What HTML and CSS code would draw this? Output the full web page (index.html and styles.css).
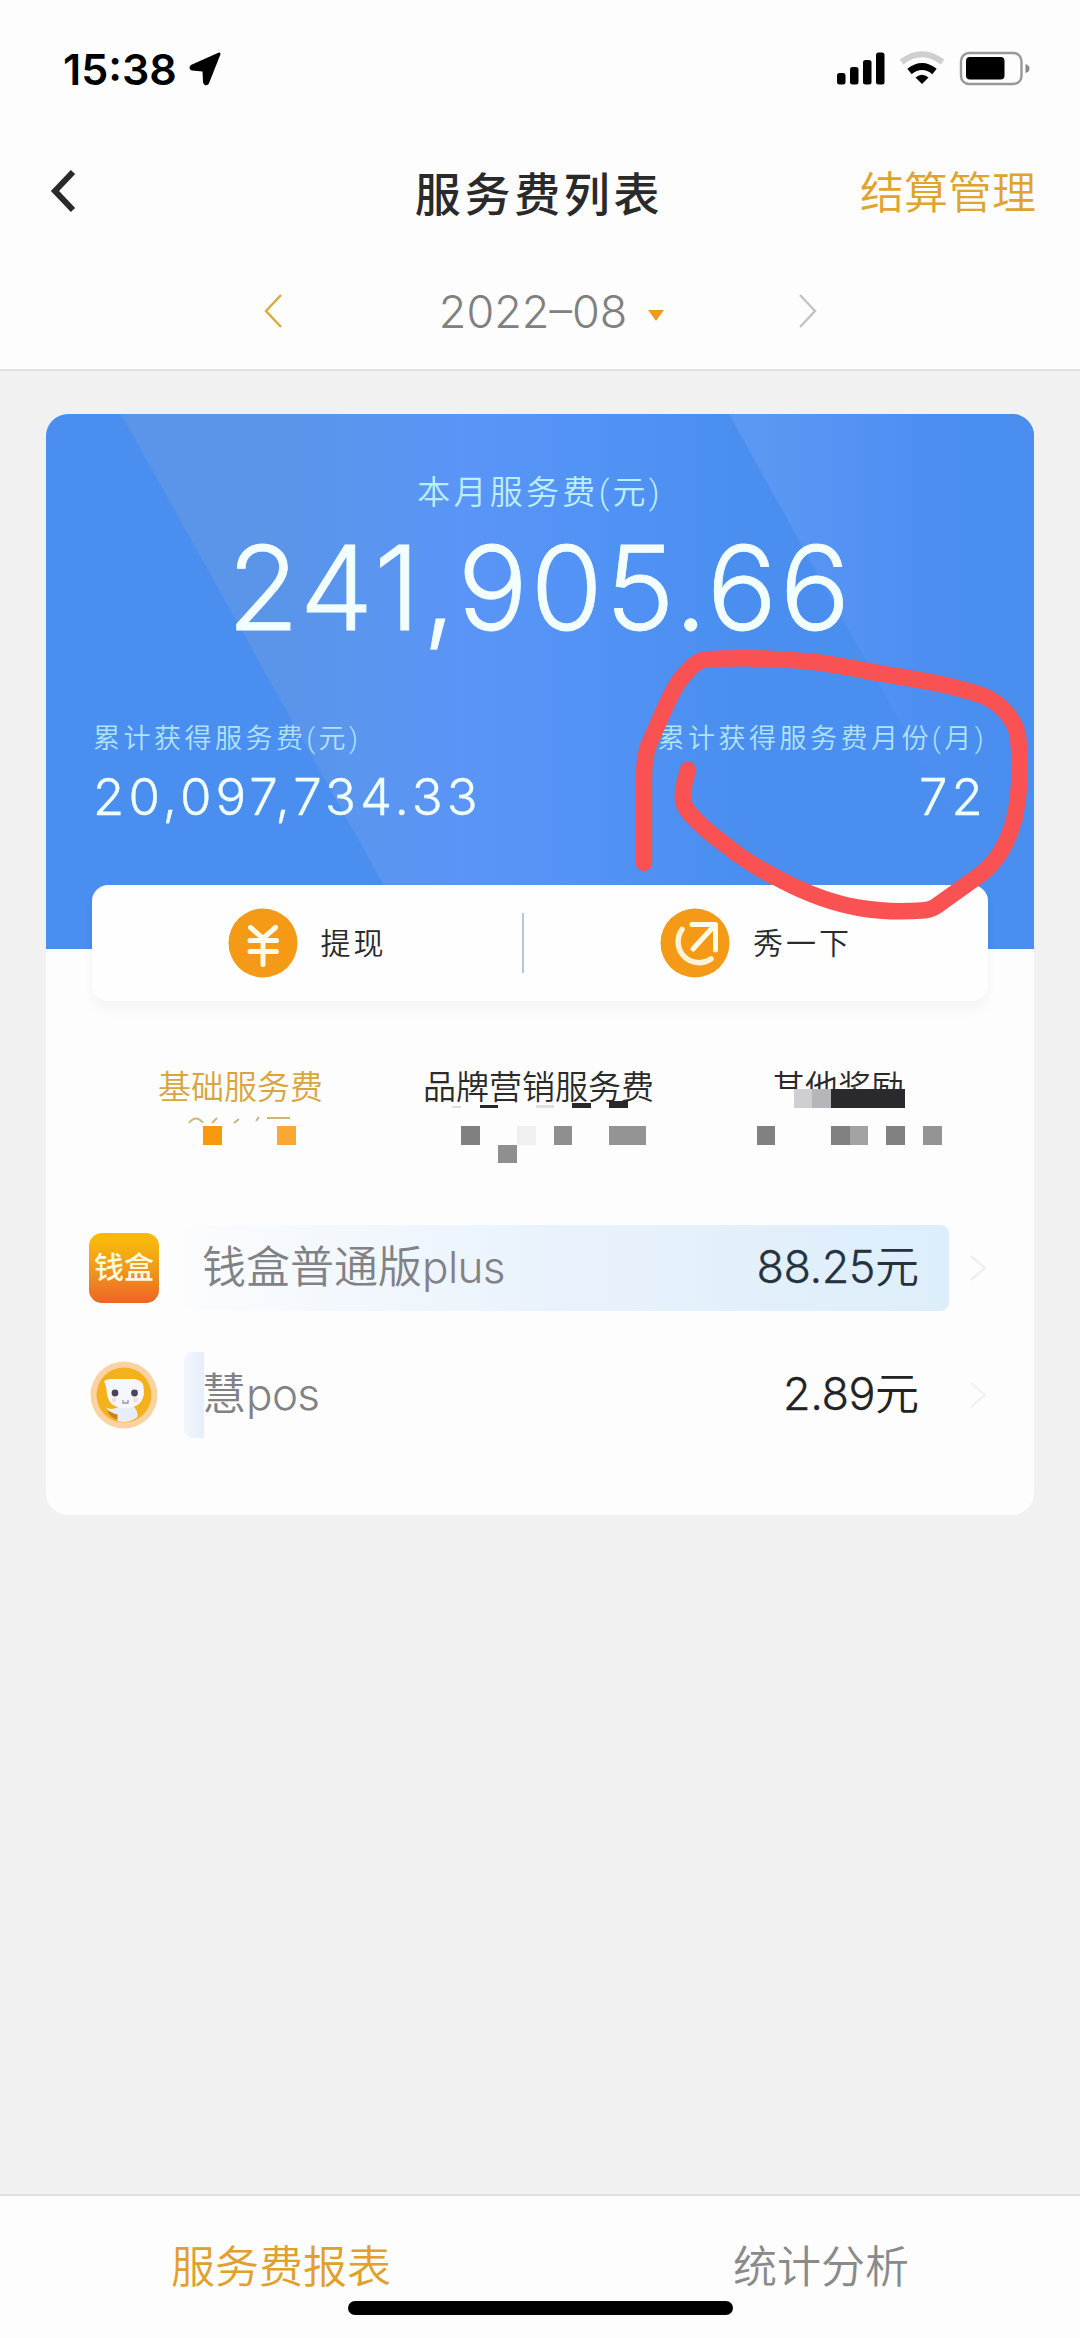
FILE: index.html
```html
<!DOCTYPE html>
<html lang="zh-CN">
<head>
<meta charset="utf-8">
<title>服务费列表</title>
<link rel="stylesheet" href="styles.css">
</head>
<body>
<div class="screen">
  <header class="header">
    <div class="status">
      <span class="clock">15:38</span>
      <svg class="location" width="34" height="34" viewBox="0 0 34 34"><path d="M31 2 4 14.200Q2 16 4 17L14.500 18Q16 18 16 19.500L16.500 30Q17.500 33 19.500 31Z" stroke="#000" stroke-width="3" stroke-linejoin="round"/></svg>
      <svg class="indicators" width="194" height="36" viewBox="836 51 194 36">
        <rect x="837" y="73" width="8.500" height="11.500" rx="2.500"/>
        <rect x="850" y="67" width="8.500" height="17.500" rx="2.500"/>
        <rect x="863" y="60" width="8.500" height="24.500" rx="2.500"/>
        <rect x="876" y="52.500" width="8.500" height="32" rx="2.500"/>
        <path d="M901.500 62Q922 46.500 942.500 62" fill="none" stroke="#cfcfcf" stroke-width="6"/>
        <path d="M909.500 71.500Q922 61.500 934.500 71.500" fill="none" stroke="#000" stroke-width="7"/>
        <path d="M915.500 77.500Q922 72 928.500 77.500L922 84Z"/>
        <rect x="961" y="53" width="60.500" height="31" rx="8" fill="none" stroke="#999" stroke-width="2.400"/>
        <rect x="966" y="57" width="38.500" height="22.500" rx="4"/>
        <path d="M1025.500 64q4 1 4 4.500t-4 4.500z" fill="#888"/>
      </svg>
    </div>
    <nav class="titlebar">
      <svg class="back" width="28" height="44" viewBox="0 0 28 44"><path d="M23 3 5 22 23 41" fill="none" stroke="#2a2a2a" stroke-width="6"/></svg>
      <h1 class="title">服务费列表</h1>
      <a class="manage">结算管理</a>
    </nav>
    <div class="month">
      <svg width="20" height="36" viewBox="0 0 20 36"><path d="M18 2 3 18 18 34" fill="none" stroke="#dba93c" stroke-width="2.400"/></svg>
      <div class="month-value"><span>2022–08</span><i class="caret"></i></div>
      <svg width="20" height="36" viewBox="0 0 20 36"><path d="M2 2 17 18 2 34" fill="none" stroke="#c4c4c4" stroke-width="2.400"/></svg>
    </div>
  </header>

  <main class="content">
    <section class="card">
      <div class="summary">
        <p class="summary-label">本月服务费(元)</p>
        <p class="summary-total">241,905.66</p>
        <div class="totals">
          <div>
            <p class="total-label">累计获得服务费(元)</p>
            <p class="total-value">20,097,734.33</p>
          </div>
          <div class="total-right">
            <p class="total-label">累计获得服务费月份(月)</p>
            <p class="total-value">72</p>
          </div>
        </div>
      </div>

      <div class="actions">
        <div class="action withdraw">
          <svg width="70" height="70" viewBox="0 0 70 70"><circle cx="35" cy="35" r="34.500" fill="#f49a17"/><path d="M22.500 19.500 35 30.500 47.500 19.500M22 32.500H48.500M22 43.500H48.500M35 30V56.500" fill="none" stroke="#fffbe8" stroke-width="5" stroke-linecap="round"/></svg>
          <span>提现</span>
        </div>
        <i class="divider"></i>
        <div class="action">
          <svg width="70" height="70" viewBox="0 0 70 70"><circle cx="35" cy="35" r="34.500" fill="#f49a17"/><path d="M22 21.500A21 21 0 0 0 51 51" fill="none" stroke="#fff3d6" stroke-width="5.500" stroke-linecap="round"/><path d="M33 41 54 18M32 16.500H55.500V42" fill="none" stroke="#fffbe8" stroke-width="5" stroke-linecap="round" stroke-linejoin="round"/></svg>
          <span>秀一下</span>
        </div>
      </div>

      <div class="tabs">
        <span class="tab active">基础服务费</span>
        <span class="tab">品牌营销服务费</span>
        <span class="tab">其他奖励</span>
      </div>

      <div class="row">
        <div class="logo">钱盒</div>
        <div class="bar">
          <span class="name">钱盒普通版<b>plus</b></span>
          <span class="amount">88.25<b>元</b></span>
        </div>
        <svg class="go" width="20" height="30" viewBox="0 0 20 30"><path d="M3 3 17 15 3 27" fill="none" stroke="#efefef" stroke-width="2.500"/></svg>
      </div>
      <div class="row">
        <svg class="avatar" width="70" height="70" viewBox="0 0 70 70">
          <circle cx="35" cy="35" r="33.500" fill="#fbd2a2"/>
          <circle cx="35" cy="35" r="27.500" fill="#f3b11c"/>
          <path d="M18 51 29 53V60Q22 58 18 51Z" fill="#c98312"/>
          <path d="M17 47.500Q24 51 31 46H44Q49 50 48.500 57Q42 62 35 62Q31 62 28.500 61V54.500Q21 53 17 47.500Z" fill="#e9ecfa"/>
          <path d="M15 21Q19 18.500 24 19H46Q55 20 55 31Q55 48 36 48Q20 48 18 34Q17.500 26 15 21Z" fill="#f6f6fe"/>
          <circle cx="26" cy="33" r="3.400" fill="#44465c"/><circle cx="45.500" cy="33" r="3.400" fill="#44465c"/>
          <path d="M34 40v3h5v-3" fill="none" stroke="#9b94a8" stroke-width="1.300"/>
          <circle cx="25" cy="40" r="2.400" fill="#f3dde2"/><circle cx="46.500" cy="40" r="2.400" fill="#f3dde2"/>
        </svg>
        <div class="bar short">
          <span class="name">慧<b>pos</b></span>
          <span class="amount">2.89<b>元</b></span>
        </div>
        <svg class="go" width="20" height="30" viewBox="0 0 20 30"><path d="M3 3 17 15 3 27" fill="none" stroke="#f2f2f2" stroke-width="2.500"/></svg>
      </div>
    </section>
  </main>

  <footer class="footer">
    <a class="footer-tab active">服务费报表</a>
    <a class="footer-tab">统计分析</a>
    <i class="home"></i>
  </footer>

  <svg class="markup" width="1080" height="2338" viewBox="0 0 1080 2338">
    <!-- mosaic over the tab amounts -->
    <path d="M189 1123Q196 1114 203 1123M212 1123 217 1118M234 1123 239 1119M256 1121 259 1117M267 1118H290" fill="none" stroke="#cfb57a" stroke-width="2"/>
    <g shape-rendering="crispEdges">
      <path d="M757 1089h160v20h-160z" fill="#fdfdfd"/>
      <rect x="203" y="1126" width="19" height="19" fill="#f7980f"/>
      <rect x="277" y="1126" width="19" height="19" fill="#f8a935"/>
      <path d="M480 1105h18v3h-18zM572 1103h19v5h-19zM609 1101h19v7h-19z" fill="#28282a"/>
      <path d="M452 1106h9v2h-9zM536 1105h18v3h-18z" fill="#dedede"/>
      <path d="M461 1126h19v19h-19z" fill="#808080"/>
      <path d="M517 1126h19v19h-19z" fill="#f0f0f0"/>
      <path d="M554 1126h18v19h-18zM498 1145h19v18h-19z" fill="#8f8f8f"/>
      <path d="M609 1126h37v19h-37zM923 1126h19v19h-19z" fill="#949494"/>
      <path d="M757 1126h18v19h-18zM831 1126h19v19h-19zM886 1126h19v19h-19z" fill="#818181"/>
      <path d="M850 1126h18v19h-18z" fill="#a3a3a3"/>
      <path d="M794 1089h18v19h-18z" fill="#cfcfd1"/>
      <path d="M812 1089h19v19h-19z" fill="#b6b6ba"/>
      <path d="M831 1089h74v19h-74z" fill="#2a2a2e"/>
    </g>
    <!-- hand-drawn marker circle -->
    <path d="M644 863V778C644 750 650 742 657 726C665 708 671 692 680 680C692 665 698 659 712 659C745 657 790 659 822 663C850 667 875 673 902 677C925 681 938 683 953 687C965 690 978 693 988 698C1005 707 1018 724 1018.500 742C1021 770 1019 800 1014 820C1008 842 996 864 977 877L935 907Q930 910 922 910.500C900 912 878 911 860 908C830 903 800 890 781 880C755 867 740 857 727 846C710 834 695 820 687 810C679 798 684 785 688 770" fill="none" stroke="#fa5252" stroke-width="16.500" stroke-linecap="round" stroke-linejoin="round"/>
  </svg>
</div>
</body>
</html>
```
FILE: styles.css
```css
* { box-sizing: border-box; margin: 0; padding: 0; }
body {
  font-family: Roboto, "Noto Sans CJK SC", sans-serif;
  font-weight: 350;
  background: #f1f1f1;
  color: #2a2a2a;
}
.screen {
  position: relative;
  width: 1080px;
  height: 2338px;
  display: flex;
  flex-direction: column;
  overflow: hidden;
}
svg { display: block; flex: none; }

.header {
  height: 371px;
  background: #fdfdfd;
  border-bottom: 2px solid #e2e2e2;
}
.status {
  display: flex;
  align-items: center;
  height: 138px;
  padding: 0 50px 0 63px;
}
.clock {
  width: 125px;
  font: 600 43px/50px Inter, sans-serif;
  letter-spacing: 0;
  color: #000;
}
.indicators { margin-left: auto; }
.titlebar {
  display: grid;
  grid-template-columns: 200px 1fr 200px;
  align-items: center;
  height: 106px;
  padding: 0 44px 0 50px;
}
.title {
  font-size: 46px;
  font-weight: 500;
  letter-spacing: 3.7px;
  text-align: center;
  line-height: 64px;
  padding: 8px 8px 0 0;
}
.manage {
  font-size: 44px;
  color: #dfa42c;
  text-align: right;
  white-space: nowrap;
  padding-bottom: 2px;
}
.month {
  display: flex;
  align-items: center;
  justify-content: space-between;
  height: 134px;
  width: 555px;
  margin-left: 263px;
}
.month-value {
  display: flex;
  align-items: center;
  gap: 21px;
  margin-left: 22px;
  font-family: Inter, sans-serif;
  font-weight: 300;
  font-size: 45px;
  letter-spacing: 0;
  color: #808080;
}
.caret {
  border: 8px solid transparent;
  border-top: 11px solid #ec9a22;
  border-bottom: 0;
  margin-top: 8px;
}

.content { flex: 1; padding: 43px 46px 0; }
.card {
  height: 1101px;
  background: #fdfdfd;
  border-radius: 22px;
  overflow: hidden;
}
.summary {
  position: relative;
  z-index: 0;
  height: 535px;
  padding: 56px 47px 0;
  color: #f2feff;
  background: #4a8ef0;
}
/* slanted light facets behind the figures */
.summary::before,
.summary::after {
  content: "";
  position: absolute;
  inset: 0;
  z-index: -1;
}
.summary::before {
  background: linear-gradient(90deg, #5a95ea 25%, #5a95f7 42%, #4f92f4 60%, #4a8ef0 70%);
  clip-path: polygon(75px 0, 683px 0, 980px 535px, 340px 535px, 340px 475px);
}
.summary::after {
  background: linear-gradient(90deg, #5b98f4 72%, #5191f3 84%, #4a8ef0 93%);
  clip-path: polygon(683px 0, 988px 0, 988px 535px, 980px 535px);
}
.summary-label {
  font-size: 33px;
  line-height: 46px;
  letter-spacing: 3.3px;
  text-align: center;
  color: #bdeefb;
}
.summary-total {
  font-family: Inter, sans-serif;
  font-weight: 300;
  font-size: 117px;
  line-height: 140px;
  letter-spacing: 2.6px;
  text-align: center;
  padding-top: 2px;
  -webkit-text-stroke: 0.8px;
}
.totals {
  display: flex;
  justify-content: space-between;
  margin-top: 62px;
}
.total-label {
  font-size: 27px;
  line-height: 38px;
  letter-spacing: 3.5px;
  color: #b0e2fa;
}
.total-value {
  font-family: Inter, sans-serif;
  font-weight: 300;
  font-size: 51px;
  line-height: 64px;
  letter-spacing: 4.1px;
  margin-top: 7px;
  -webkit-text-stroke: 0.4px;
}
.total-right { text-align: right; }

.actions {
  position: relative;
  display: flex;
  align-items: center;
  height: 116px;
  margin: -64px 46px 0;
  background: #fefefe;
  border-radius: 16px;
  box-shadow: 0 8px 14px rgba(0, 0, 0, 0.04);
}
.action {
  flex: 1;
  display: flex;
  align-items: center;
  justify-content: center;
  gap: 23px;
  font-size: 30px;
  letter-spacing: 3px;
}
.action span { padding-bottom: 4px; }
.withdraw { flex: 0 0 430px; }
.divider { width: 2px; height: 60px; background: #b8c6dc; }

.tabs {
  display: flex;
  height: 203px;
  padding: 63px 0 0 112px;
  font-size: 33px;
  line-height: 48px;
}
.tab { flex: none; width: 349px; }
.tab.active { width: 265px; color: #d9a540; }

.row {
  display: flex;
  align-items: center;
  height: 127px;
  padding: 0 46px 0 43px;
}
.logo {
  width: 70px;
  height: 70px;
  border-radius: 13px;
  background: linear-gradient(#f8b90a 10%, #f09a1c 50%, #ee6426);
  color: #fff8dc;
  font-size: 30px;
  font-weight: 500;
  line-height: 70px;
  text-align: center;
}
.bar {
  display: flex;
  align-items: center;
  justify-content: space-between;
  width: 765px;
  height: 86px;
  margin: 0 19px 0 25px;
  padding: 0 30px 8px 18px;
  border-radius: 8px;
  background: linear-gradient(90deg, #fbfcfe, #e8f2fc 50%, #ddeefb);
}
.bar.short { background: linear-gradient(90deg, #f3f7fd, #e6eefb) no-repeat 0 0 / 20px 100%; }
.name {
  font-size: 44px;
  color: #808286;
}
.name b {
  font-family: Inter, sans-serif;
  font-weight: 300;
  letter-spacing: -0.6px;
}
.amount {
  font-family: Inter, "Noto Sans CJK SC", sans-serif;
  font-weight: 300;
  font-size: 45px;
  letter-spacing: -0.5px;
  color: #263240;
  -webkit-text-stroke: 0.3px;
}
.short .amount { color: #222; }
.amount b {
  font-size: 44px;
  font-weight: 350;
  letter-spacing: 0;
  -webkit-text-stroke: 0;
}

.footer {
  position: relative;
  display: flex;
  justify-content: space-between;
  height: 144px;
  padding: 40px 171px 0 171px;
  border-top: 2px solid #e0e0e0;
  background: #fdfdfd;
}
.footer-tab { font-size: 44px; line-height: 64px; color: #8a8a8a; }
.footer-tab.active { color: #dfa02c; }
.home {
  position: absolute;
  left: 348px;
  bottom: 23px;
  width: 385px;
  height: 14px;
  border-radius: 7px;
  background: #000;
}
.markup { position: absolute; left: 0; top: 0; }
```
